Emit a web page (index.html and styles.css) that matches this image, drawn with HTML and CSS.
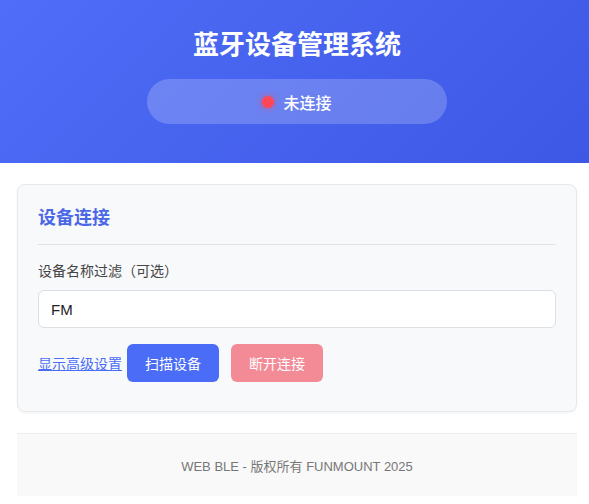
FILE: index.html
```html
<!DOCTYPE html>
<html lang="zh-CN">
<head>
    <meta charset="UTF-8">
    <meta name="viewport" content="width=device-width, initial-scale=1.0">
    <title>蓝牙设备管理系统</title>
    <link rel="stylesheet" href="styles.css">
</head>
<body>

<header class="app-header">
    <h1 class="app-title">蓝牙设备管理系统</h1>
    <div class="status-pill">
        <span class="status-dot"></span>
        <span class="status-text">未连接</span>
    </div>
</header>

<main class="content">
    <section class="card">
        <h2 class="card-title">设备连接</h2>

        <label class="field-label" for="nameFilter">设备名称过滤（可选）</label>
        <input class="field-input" type="text" id="nameFilter" value="FM">

        <div class="actions">
            <a href="#" class="advanced-link">显示高级设置</a>
            <button class="btn btn-primary">扫描设备</button>
            <button class="btn btn-danger" disabled>断开连接</button>
        </div>
    </section>

    <footer class="app-footer">
        WEB BLE - 版权所有 FUNMOUNT 2025
    </footer>
</main>

</body>
</html>
```

FILE: styles.css
```css
body {
    margin: 0;
    font-family: "Liberation Sans", "Noto Sans CJK SC", sans-serif;
    background-color: #ffffff;
    color: #333;
}

.app-header {
    height: 163px;
    box-sizing: border-box;
    padding-top: 27px;
    padding-left: 5px;
    background: linear-gradient(135deg, #4f6df8 0%, #3d58e4 100%);
    color: #fff;
    display: flex;
    flex-direction: column;
    align-items: center;
}

.app-title {
    margin: 0;
    font-size: 26px;
    line-height: 36px;
    font-weight: bold;
}

.status-pill {
    margin-top: 16px;
    width: 300px;
    height: 45px;
    border-radius: 23px;
    background-color: rgba(255, 255, 255, 0.2);
    display: flex;
    align-items: center;
    justify-content: center;
    gap: 9px;
}

.status-dot {
    width: 12px;
    height: 12px;
    border-radius: 50%;
    background-color: #ff4757;
    box-shadow: 0 0 6px rgba(255, 71, 87, 0.8);
}

.status-text {
    font-size: 16px;
    font-weight: 500;
}

.content {
    padding: 21px 12px 0 17px;
}

.card {
    background-color: #f8f9fa;
    border: 1px solid #e6e9ec;
    border-radius: 8px;
    box-shadow: 0 1px 3px rgba(0, 0, 0, 0.05);
    padding: 20px 20px 29px 20px;
}

.card-title {
    margin: 0 0 15px 0;
    padding-bottom: 13px;
    border-bottom: 1px solid #dfe3e8;
    font-size: 18px;
    line-height: 26px;
    color: #4a67e6;
}

.field-label {
    display: block;
    font-size: 14px;
    color: #444;
    margin-bottom: 10px;
}

.field-input {
    display: block;
    width: 100%;
    height: 38px;
    box-sizing: border-box;
    padding: 8px 12px;
    border: 1px solid #dcdfe3;
    border-radius: 6px;
    font-family: "Liberation Sans", "Noto Sans CJK SC", sans-serif;
    font-size: 15px;
    color: #222;
    background-color: #fff;
}

.actions {
    margin-top: 16px;
    display: flex;
    align-items: center;
}

.advanced-link {
    font-size: 14px;
    color: #4a6cf7;
    margin-right: 5px;
}

.btn {
    width: 92px;
    height: 38px;
    border: none;
    border-radius: 6px;
    font-family: "Liberation Sans", "Noto Sans CJK SC", sans-serif;
    font-size: 14px;
    color: #fff;
    cursor: pointer;
}

.btn-primary {
    background-color: #4a6cf7;
}

.btn-danger {
    margin-left: 12px;
    background-color: #f38b97;
}

.app-footer {
    margin-top: 21px;
    height: 62px;
    display: flex;
    align-items: center;
    justify-content: center;
    background-color: #f9f9f9;
    border-top: 1px solid #eeeeee;
    font-size: 13px;
    color: #777;
}
```
